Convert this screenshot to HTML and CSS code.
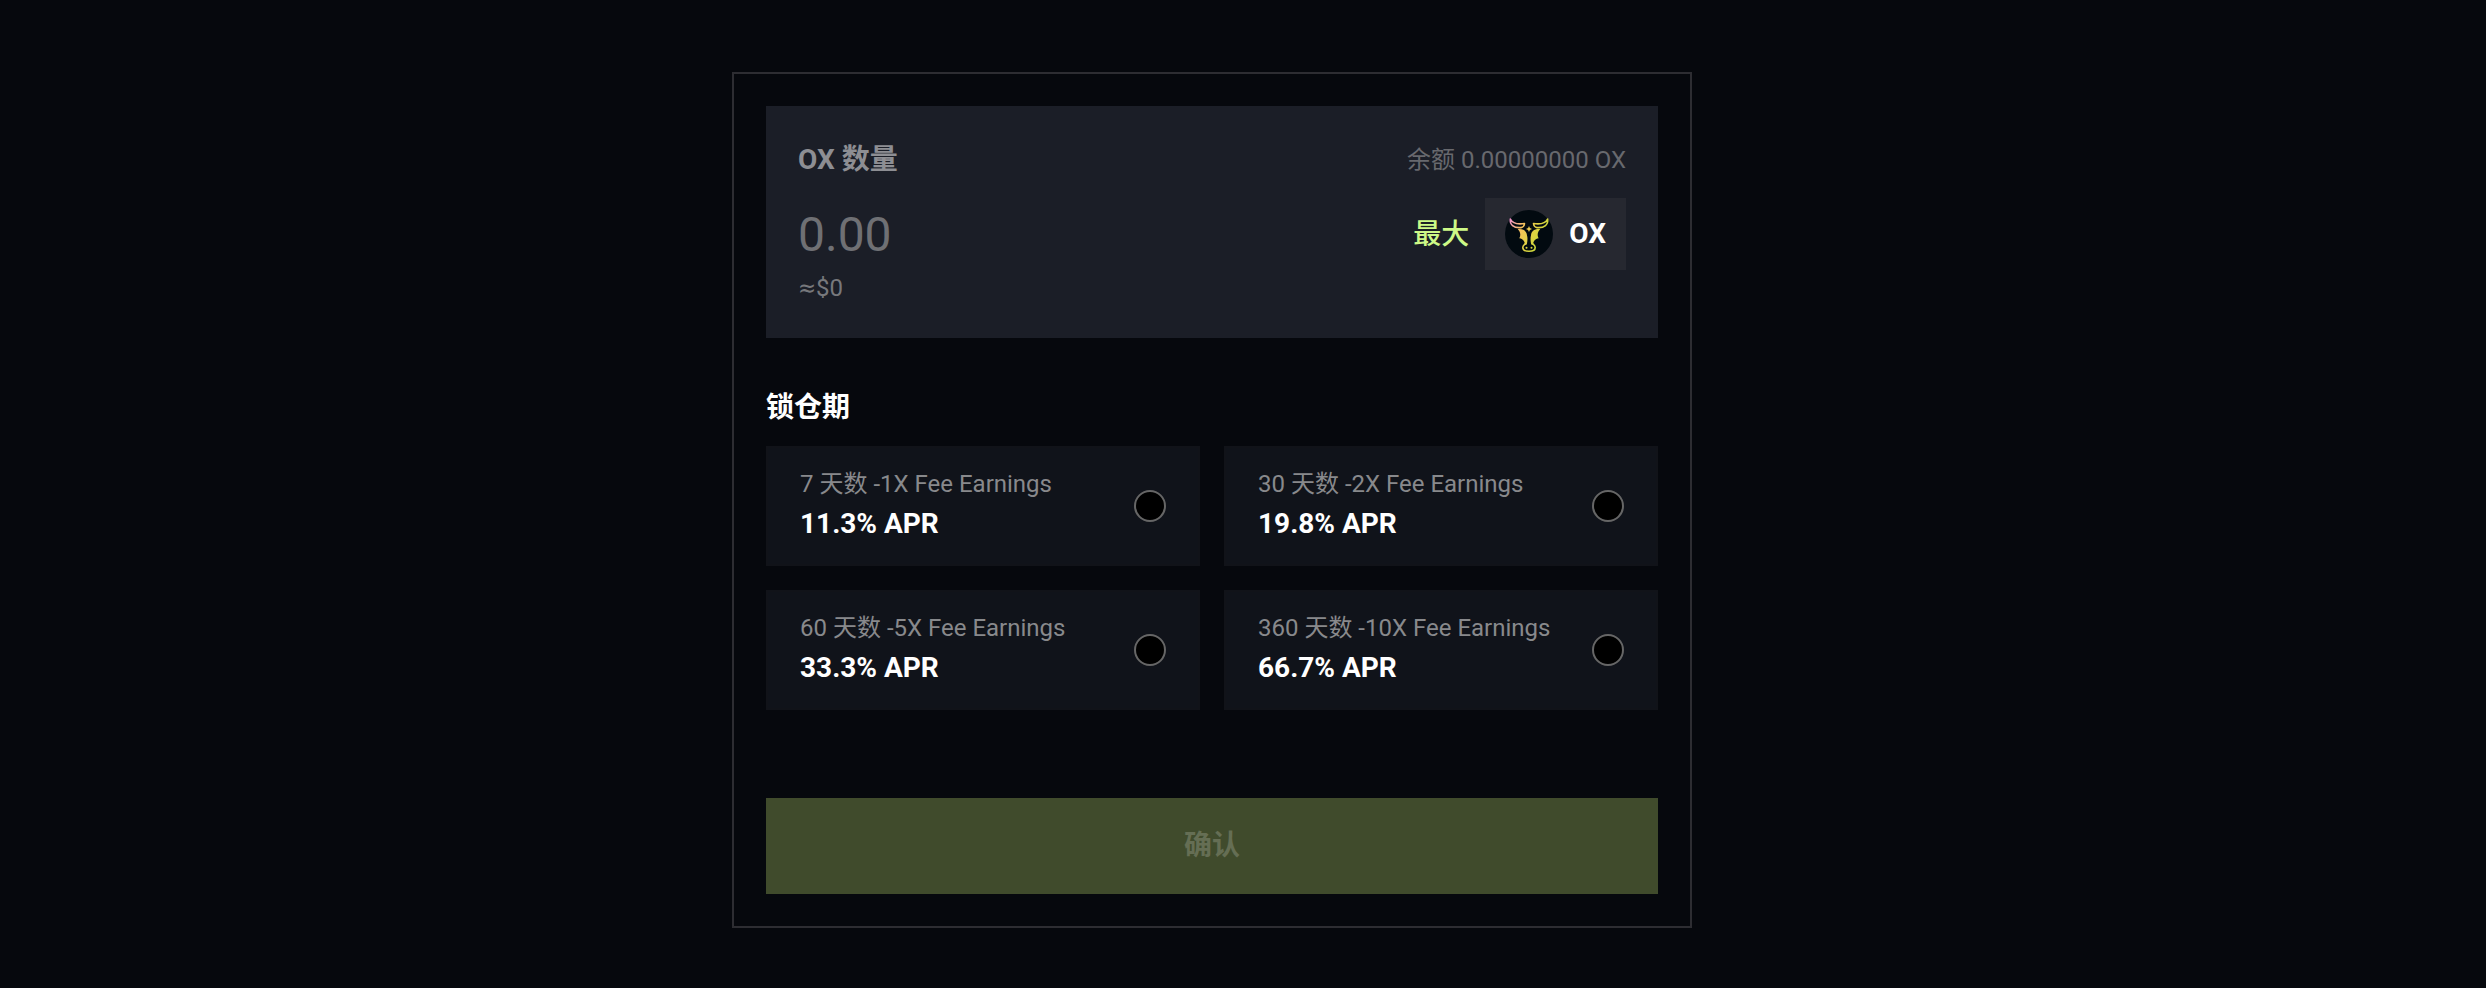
FILE: index.html
```html
<!DOCTYPE html>
<html lang="zh-CN">
<head>
<meta charset="utf-8">
<meta name="viewport" content="width=device-width, initial-scale=1">
<title>OX</title>
<link rel="stylesheet" href="styles.css">
</head>
<body>
<main class="page">
  <form class="stake">
    <section class="amount">
      <div class="amount-row">
        <label class="amount-label" for="amount">OX 数量</label>
        <span class="balance">余额 0.00000000 OX</span>
      </div>
      <div class="amount-row">
        <input class="amount-input" id="amount" type="text" inputmode="decimal" placeholder="0.00">
        <div class="amount-actions">
          <button class="max" type="button">最大</button>
          <button class="token" type="button">
            <svg class="token-icon" viewBox="0 0 48 48" aria-hidden="true">
              <defs>
                <linearGradient id="gold" gradientUnits="userSpaceOnUse" x1="4" y1="10" x2="36" y2="28">
                  <stop offset="0" stop-color="#f08fd0"/>
                  <stop offset="0.4" stop-color="#f7c35c"/>
                  <stop offset="0.75" stop-color="#e0d242"/>
                  <stop offset="1" stop-color="#cbd83a"/>
                </linearGradient>
              </defs>
              <circle cx="24" cy="24" r="24" fill="#020a10"/>
              <g fill="none" stroke="url(#gold)" stroke-width="1.6" stroke-linejoin="round">
                <path d="M5.400 9C4.500 14.500 8.500 18.200 16 17.600C18.300 17.300 19.300 15.500 19.500 13.500C13 14.500 7.500 13.500 5.400 9Z"/>
                <path d="M42.600 9C43.500 14.500 39.500 18.200 32 17.600C29.700 17.300 28.700 15.500 28.500 13.500C35 14.500 40.500 13.500 42.600 9Z"/>
                <path d="M21 32.500C20.300 34.800 17.800 34.600 17.800 37.500C17.800 40.500 20.500 41.300 24 41.300C27.500 41.300 30.200 40.500 30.200 37.500C30.200 34.600 27.700 34.800 27 32.500"/>
              </g>
              <g fill="url(#gold)">
                <path d="M12.800 19.200C18.500 18.600 21.800 21.500 22 25.500C22.800 27.500 22.500 31.500 21.800 34.500L20 35C20 31.500 18 28.800 14.300 28.200C16 25.500 15.500 21.500 12.800 19.200Z"/>
                <path d="M35.200 19.200C29.500 18.600 26.200 21.500 26 25.500C25.200 27.500 25.500 31.500 26.200 34.500L28 35C28 31.500 30 28.800 33.700 28.200C32 25.500 32.500 21.500 35.200 19.200Z"/>
                <path d="M24 16L24.900 18.100L27 19L24.900 19.900L24 22L23.100 19.900L21 19L23.100 18.100Z"/>
                <circle cx="21.500" cy="37.700" r="1"/>
                <circle cx="26.500" cy="37.700" r="1"/>
              </g>
            </svg>
            OX
          </button>
        </div>
      </div>
      <div class="fiat"><span class="approx">≈</span>$0</div>
    </section>

    <fieldset class="period">
      <legend class="period-title">锁仓期</legend>
      <div class="options">
        <label class="option">
          <span class="option-text"><span class="option-name">7 天数 -1X Fee Earnings</span><span class="option-apr">11.3% APR</span></span>
          <input class="radio" type="radio" name="period" value="7">
        </label>
        <label class="option">
          <span class="option-text"><span class="option-name">30 天数 -2X Fee Earnings</span><span class="option-apr">19.8% APR</span></span>
          <input class="radio" type="radio" name="period" value="30">
        </label>
        <label class="option">
          <span class="option-text"><span class="option-name">60 天数 -5X Fee Earnings</span><span class="option-apr">33.3% APR</span></span>
          <input class="radio" type="radio" name="period" value="60">
        </label>
        <label class="option">
          <span class="option-text"><span class="option-name">360 天数 -10X Fee Earnings</span><span class="option-apr">66.7% APR</span></span>
          <input class="radio" type="radio" name="period" value="360">
        </label>
      </div>
    </fieldset>

    <button class="confirm" type="submit" disabled>确认</button>
  </form>
</main>
</body>
</html>
```
FILE: styles.css
```css
* {
  box-sizing: border-box;
}

body {
  margin: 0;
  min-height: 100vh;
  background: #06080d;
  color: #fff;
  font-family: Roboto, "Noto Sans CJK SC", sans-serif;
  font-size: 24px;
  line-height: 36px;
}

button,
input {
  margin: 0;
  padding: 0;
  border: 0;
  background: none;
  color: inherit;
  font: inherit;
}

.page {
  padding: 72px 62px 60px 0;
}

.stake {
  max-width: 960px;
  margin: 0 auto;
  padding: 32px;
  border: 2px solid #2d2d32;
}

.amount {
  padding: 32px;
  background: #1b1e27;
}

.amount-row {
  display: flex;
  align-items: center;
  justify-content: space-between;
  gap: 16px;
}

.amount-label {
  margin-bottom: 16px;
  color: #8d8e93;
  font-size: 28px;
  font-weight: 700;
  line-height: 44px;
}

.balance {
  margin-bottom: 16px;
  color: #68696e;
}

.amount-input {
  flex: 1;
  min-width: 0;
  height: 72px;
  font-size: 48px;
  outline: 0;
}

.amount-input::placeholder {
  color: #6f7074;
  opacity: 1;
}

.amount-actions {
  display: flex;
  align-items: center;
  gap: 16px;
}

.max {
  padding-top: 2px;
  color: #cdf987;
  font-size: 28px;
  font-weight: 500;
}

.token {
  display: flex;
  align-items: center;
  gap: 16px;
  height: 72px;
  padding: 0 20px;
  background: #262830;
  font-size: 28px;
  font-weight: 700;
}

.token-icon {
  width: 48px;
  height: 48px;
}

.fiat {
  height: 36px;
  color: #77787c;
}

.approx {
  font-family: "DejaVu Sans Condensed", "DejaVu Sans", sans-serif;
}

.period {
  min-width: 0;
  margin: 48px 0 88px;
  padding: 0;
  border: 0;
}

.period-title {
  padding: 0;
  margin-bottom: 16px;
  font-size: 28px;
  font-weight: 700;
  line-height: 44px;
}

.options {
  display: grid;
  grid-template-columns: 1fr 1fr;
  gap: 24px;
}

.option {
  display: flex;
  align-items: center;
  justify-content: space-between;
  min-height: 120px;
  padding: 0 32px;
  border: 2px solid #111319;
  background: #10131a;
}

.option-text {
  display: flex;
  flex-direction: column;
  gap: 2px;
  padding-bottom: 2px;
}

.option-name {
  color: #88898c;
}

.option-apr {
  font-size: 28px;
  font-weight: 700;
  line-height: 40px;
}

.radio {
  appearance: none;
  width: 32px;
  height: 32px;
  border: 2px solid #666;
  border-radius: 50%;
  background: #000;
}

.radio:checked {
  background: radial-gradient(#cdf987 0 8px, #000 9px);
}

.confirm {
  width: 100%;
  height: 96px;
  background: #404b2c;
  color: #656e54;
  font-size: 28px;
  font-weight: 700;
}
```
